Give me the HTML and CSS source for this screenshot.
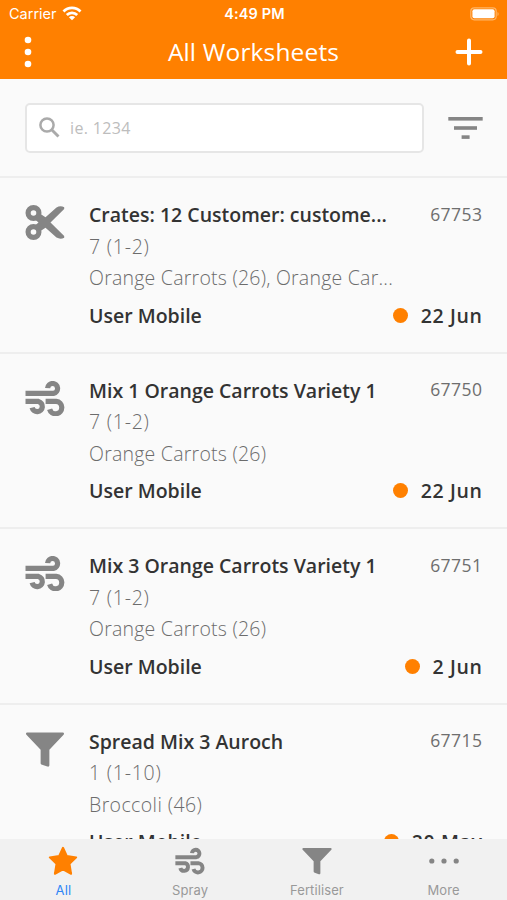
FILE: index.html
```html
<!DOCTYPE html>
<html lang="en">
<head>
<meta charset="utf-8">
<title>All Worksheets</title>
<link rel="stylesheet" href="styles.css">
</head>
<body>
<svg class="defs" width="0" height="0">
  <symbol id="scissors" viewBox="0 0 40 35">
    <g fill="none" stroke="currentColor">
      <circle cx="8.500" cy="8" r="5.400" stroke-width="5.200"/>
      <circle cx="8.500" cy="27" r="5.400" stroke-width="5.200"/>
    </g>
    <path d="M9.500 14 15.500 9 20.500 12.200 31.500 2.500Q35.500.300 39.200 2.300V4L25.500 17.500 39.200 31V32.700Q35.500 34.700 31.500 32.500L20.500 22.800 15.500 26 9.500 21 13.500 17.500z"/>
  </symbol>
  <symbol id="wind" viewBox="0 0 40 35">
    <g fill="none" stroke="currentColor" stroke-width="5.200">
      <path d="M0.500 12.400H28.500A5 5 0 1 0 22.600 7.100"/>
      <path d="M0.500 20.400H13.500A5.200 5.200 0 1 1 7.100 26.700"/>
      <path d="M20.600 20.400H31.200A6.200 6.200 0 1 1 24.600 28.200"/>
    </g>
  </symbol>
  <symbol id="funnel" viewBox="0 0 40 36">
    <path d="M1.800.5H38.200c1.300 0 1.800 1.500.9 2.400L24.500 18.300V34c0 1.300-.8 1.900-2.100 1.500l-5.400-1.700c-1-.3-1.500-.8-1.500-1.800V18.300L.9 2.900C0 2 .5.500 1.800.500z"/>
  </symbol>
</svg>
<div class="app">
  <header class="header">
    <div class="status">
      <div class="carrier"><span>Carrier</span>
        <svg width="20" height="15" viewBox="0 0 20 15"><g fill="none" stroke="#fff" stroke-width="2.800"><path d="M1.500 5.500a12 12 0 0 1 17 0"/><path d="M4.800 9a7.400 7.400 0 0 1 10.400 0"/></g><path fill="#fff" d="M10 14.300 6.900 11.200a4.400 4.400 0 0 1 6.200 0z"/></svg>
      </div>
      <span class="time">4:49 PM</span>
      <svg class="battery" width="30" height="14" viewBox="0 0 30 14"><rect x=".8" y=".8" width="25.400" height="12" rx="3.500" fill="none" stroke="#ffb566" stroke-width="1.200"/><rect x="2.400" y="2.300" width="22.200" height="9" rx="2" fill="#fff"/><path d="M27.500 5v4c1.500-.8 1.500-3.200 0-4z" fill="#ffb566"/></svg>
    </div>
    <div class="nav">
      <svg width="8" height="32" viewBox="0 0 8 32" fill="#fff"><circle cx="4" cy="4" r="3.300"/><circle cx="4" cy="16" r="3.300"/><circle cx="4" cy="28" r="3.300"/></svg>
      <h1 class="heading">All Worksheets</h1>
      <svg width="28" height="28" viewBox="0 0 28 28" fill="none" stroke="#fff" stroke-width="4" stroke-linecap="round"><path d="M14 2.500v23M2.500 14h23"/></svg>
    </div>
  </header>
  <section class="search">
    <div class="field">
      <svg width="21" height="21" viewBox="0 0 21 21" fill="none" stroke="#aaa" stroke-width="2.500"><circle cx="8" cy="8" r="6.600"/><path stroke-width="2.900" d="m12.700 12.700 6.800 6.800"/></svg>
      <span class="hint">ie. 1234</span>
    </div>
    <svg width="35" height="24" viewBox="0 0 35 24" fill="#858585"><rect x=".3" y="1" width="34.400" height="3.600"/><rect x="6" y="10.200" width="23" height="3.600"/><rect x="13.600" y="19.300" width="8" height="3.600"/></svg>
  </section>
  <main class="list">
    <article class="row">
      <svg class="kind"><use href="#scissors"/></svg>
      <div class="body">
        <div class="line"><h2 class="title">Crates: 12 Customer: custome...</h2><span class="num">67753</span></div>
        <p class="meta">7 (1-2)</p>
        <p class="meta crop">Orange Carrots (26), Orange Car...</p>
        <div class="line foot"><span class="user">User Mobile</span><span class="date"><i class="dot"></i>22 Jun</span></div>
      </div>
    </article>
    <article class="row">
      <svg class="kind"><use href="#wind"/></svg>
      <div class="body">
        <div class="line"><h2 class="title">Mix 1 Orange Carrots Variety 1</h2><span class="num">67750</span></div>
        <p class="meta">7 (1-2)</p>
        <p class="meta crop">Orange Carrots (26)</p>
        <div class="line foot"><span class="user">User Mobile</span><span class="date"><i class="dot"></i>22 Jun</span></div>
      </div>
    </article>
    <article class="row">
      <svg class="kind"><use href="#wind"/></svg>
      <div class="body">
        <div class="line"><h2 class="title">Mix 3 Orange Carrots Variety 1</h2><span class="num">67751</span></div>
        <p class="meta">7 (1-2)</p>
        <p class="meta crop">Orange Carrots (26)</p>
        <div class="line foot"><span class="user">User Mobile</span><span class="date"><i class="dot"></i>2 Jun</span></div>
      </div>
    </article>
    <article class="row">
      <svg class="kind"><use href="#funnel"/></svg>
      <div class="body">
        <div class="line"><h2 class="title">Spread Mix 3 Auroch</h2><span class="num">67715</span></div>
        <p class="meta">1 (1-10)</p>
        <p class="meta crop last">Broccoli (46)</p>
        <div class="line foot"><span class="user">User Mobile</span><span class="date"><i class="dot"></i>20 May</span></div>
      </div>
    </article>
  </main>
  <nav class="tabs">
    <div class="tab active"><svg viewBox="0 0 30 30"><path fill="#ff8000" stroke="#ff8000" stroke-width="2" stroke-linejoin="round" d="m15 1.800 3.900 8.300 9.300 1.300-6.700 6.500 1.600 9.900-8.100-4.400-8.100 4.400 1.600-9.900-6.700-6.500 9.300-1.300z"/></svg><span>All</span></div>
    <div class="tab"><svg><use href="#wind"/></svg><span>Spray</span></div>
    <div class="tab"><svg><use href="#funnel"/></svg><span>Fertiliser</span></div>
    <div class="tab"><svg viewBox="0 0 30 30"><circle cx="2.800" cy="15" r="2.600"/><circle cx="15" cy="15" r="2.600"/><circle cx="27.200" cy="15" r="2.600"/></svg><span>More</span></div>
  </nav>
</div>
</body>
</html>
```
FILE: styles.css
```css
* { box-sizing: border-box; margin: 0; padding: 0; }
body { font-family: "Open Sans", "Noto Sans", sans-serif; color: #333; background: #fafafa; overflow: hidden; }
svg { display: block; flex: none; }
.defs { position: absolute; }
.app { width: 507px; height: 900px; display: flex; flex-direction: column; overflow: hidden; }
.header { height: 79px; flex: none; background: #ff8000; color: #fff; }
.status { height: 27px; display: grid; grid-template-columns: 1fr auto 1fr; align-items: center; padding: 0 7px 0 9px; font-family: Inter, sans-serif; font-size: 14.500px; }
.carrier { display: flex; align-items: center; gap: 5px; }
.time { font-weight: 600; letter-spacing: .1px; }
.battery { justify-self: end; }
.nav { height: 52px; display: grid; grid-template-columns: 28px 1fr 28px; align-items: center; padding: 0 24px 2px; }
.heading { text-align: center; font-size: 24.500px; line-height: 30px; font-weight: 500; letter-spacing: .15px; }
.search { height: 99px; flex: none; display: flex; align-items: center; justify-content: space-between; padding: 0 24px 0 25px; border-bottom: 2px solid #eee; }
.field { width: 399px; height: 50px; display: flex; align-items: center; gap: 10px; padding-left: 12px; background: #fff; border: 2px solid #e6e6e6; border-radius: 5px; }
.hint { color: #bdbdbd; font-size: 16px; letter-spacing: .35px; font-weight: 500; }
.list { flex: 1; min-height: 0; overflow: hidden; }
.row { height: 175.500px; display: flex; gap: 24px; padding: 23px 25px 0; border-bottom: 2px solid #eee; }
.kind { width: 40px; height: 35px; margin-top: 4px; color: #858585; fill: #858585; }
.body { flex: 1; min-width: 0; white-space: nowrap; }
.line { display: flex; justify-content: space-between; align-items: center; height: 27px; }
.title, .user, .date { font-size: 19.500px; line-height: 27px; font-weight: 600; }
.num { font-size: 17.500px; color: #6e6e6e; line-height: 24px; margin-top: -2px; letter-spacing: .45px; margin-right: -.45px; }
.meta { font-size: 19.500px; line-height: 31.500px; margin-top: 2.700px; color: #6c6c6c; font-weight: 300; letter-spacing: .75px; }
.crop { margin-top: 0; letter-spacing: .23px; }
.last { letter-spacing: .4px; }
.foot { margin-top: 8px; }
.date { display: flex; align-items: center; letter-spacing: .65px; margin-right: -.65px; gap: 13px; }
.dot { width: 15px; height: 15px; border-radius: 50%; background: #ff8000; }
.tabs { height: 61px; flex: none; display: grid; grid-template-columns: repeat(4, 1fr); background: #f1f1f1; }
.tab { display: flex; flex-direction: column; align-items: center; padding-top: 7px; color: #858585; fill: #858585; }
.tab svg { width: 30px; height: 30px; }
.tab span { font-family: Inter, sans-serif; font-size: 13px; line-height: 17px; margin-top: 6px; color: #999; letter-spacing: .1px; }
.tab.active span { color: #2f86f6; }
```
